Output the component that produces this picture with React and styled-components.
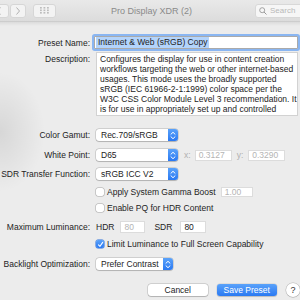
import React from 'react'
import styled, { createGlobalStyle } from 'styled-components'

const Global = createGlobalStyle`
  html, body {
    margin: 0;
    padding: 0;
    width: 300px;
    height: 300px;
    overflow: hidden;
    background: #ececec;
  }
  * { box-sizing: border-box; }
`

const Window = styled.div`
  width: 300px;
  height: 300px;
  overflow: hidden;
  font-family: "Liberation Sans", Arial, sans-serif;
  font-size: 8.5px;
  color: #232323;
  background: #ececec;
  display: flex;
  flex-direction: column;
`

const TitleBar = styled.div`
  height: 22px;
  flex: none;
  display: flex;
  align-items: center;
  padding: 0 0 0 0;
  background: linear-gradient(#e9e9e9, #dcdcdc);
  border-bottom: 1px solid #cdcdcd;
`

const NavGroup = styled.div`
  display: flex;
  margin-left: -11px;
  gap: 1px;
`

const ToolButton = styled.div`
  width: ${p => p.$w || 20}px;
  height: 14px;
  background: #f3f3f3;
  border: 1px solid #d6d6d6;
  border-radius: 3px;
  display: flex;
  align-items: center;
  justify-content: center;
  color: #b5b5b5;
  margin-left: ${p => p.$ml || 0}px;
`

const Title = styled.div`
  flex: 1;
  text-align: center;
  color: #8a8a8a;
  font-size: 9px;
  padding-right: 8px;
`

const Search = styled.div`
  width: 50px;
  height: 14px;
  margin-right: -5px;
  background: #f6f6f6;
  border: 1px solid #d8d8d8;
  border-radius: 3px;
  display: flex;
  align-items: center;
  gap: 3px;
  padding-left: 3px;
  color: #b8b8b8;
  font-size: 8px;
`

const Sheet = styled.div`
  flex: 1;
  position: relative;
  padding-top: 14px;
  background:
    radial-gradient(ellipse 45px 60px at 0 110px, rgba(0,0,0,0.09), transparent),
    linear-gradient(rgba(0,0,0,0.07), transparent 4px),
    #ececec;
`

const Row = styled.div`
  display: grid;
  grid-template-columns: 90px 1fr;
  column-gap: 6px;
  align-items: ${p => p.$top ? 'start' : 'center'};
  margin-top: ${p => p.$mt || 0}px;
`

const Label = styled.div`
  text-align: right;
  white-space: nowrap;
  padding-top: ${p => p.$pt || 0}px;
`

const Controls = styled.div`
  display: flex;
  align-items: center;
  white-space: nowrap;
`

const NameField = styled.div`
  height: 13px;
  margin-right: 2px;
  margin-left: -2px;
  background: #fff;
  border: 1px solid #aaa;
  box-shadow: 0 0 0 2px #8ab6f2;
  border-radius: 1px;
  display: flex;
  align-items: center;
  padding-left: 1px;
`

const Selected = styled.span`
  background: #b3d4fc;
  padding: 1px 2px;
  line-height: 9px;
`

const TextArea = styled.div`
  margin-right: 2px;
  height: 64px;
  background: #fff;
  border: 1px solid #d2d2d2;
  padding: 1px 3px;
  line-height: 10px;
  white-space: nowrap;
  overflow: hidden;
`

const Popup = styled.div`
  width: ${p => p.$w || 82}px;
  height: 12px;
  background: #fff;
  border-radius: 3px;
  box-shadow: 0 0 0 0.5px rgba(0,0,0,0.22), 0 0.5px 1px rgba(0,0,0,0.15);
  display: flex;
  align-items: center;
  justify-content: space-between;
  padding-left: 5px;
  overflow: hidden;
`

const Stepper = styled.div`
  width: 10px;
  height: 12px;
  background: linear-gradient(#5aa2fa, #2a79f2);
  display: flex;
  align-items: center;
  justify-content: center;
`

const Small = styled.span`
  color: ${p => p.$dim ? '#b0b0b0' : '#232323'};
  margin: 0 ${p => p.$mr || 4}px 0 ${p => p.$ml || 0}px;
`

const NumField = styled.div`
  width: ${p => p.$w || 37}px;
  height: ${p => p.$h || 11}px;
  background: #fff;
  border: 1px solid #dcdcdc;
  color: ${p => p.$dim ? '#b4b4b4' : '#232323'};
  display: flex;
  align-items: center;
  padding-left: 3px;
`

const Check = styled.div`
  width: 8px;
  height: 8px;
  border-radius: 2px;
  background: ${p => p.$on ? 'linear-gradient(#5aa2fa, #2a79f2)' : '#fff'};
  box-shadow: 0 0 0 0.5px ${p => p.$on ? '#2a6fd8' : 'rgba(0,0,0,0.3)'};
  margin-right: 3px;
  display: flex;
  align-items: center;
  justify-content: center;
  flex: none;
`

const Buttons = styled.div`
  display: flex;
  align-items: center;
  margin-top: 13px;
  padding-left: 148px;
`

const Button = styled.div`
  width: ${p => p.$w}px;
  height: 12px;
  border-radius: 3px;
  display: flex;
  align-items: center;
  justify-content: center;
  margin-right: ${p => p.$mr || 0}px;
  background: ${p => p.$primary ? 'linear-gradient(#5aa2fa, #2a79f2)' : '#fff'};
  color: ${p => p.$primary ? '#fff' : '#232323'};
  box-shadow: 0 0 0 0.5px rgba(0,0,0,${p => p.$primary ? 0.1 : 0.22}), 0 0.5px 1px rgba(0,0,0,0.15);
`

const Help = styled.div`
  width: 14px;
  height: 14px;
  flex: none;
  border-radius: 50%;
  background: #fff;
  box-shadow: 0 0 0 0.5px rgba(0,0,0,0.22), 0 0.5px 1px rgba(0,0,0,0.15);
  display: flex;
  align-items: center;
  justify-content: center;
  font-size: 9px;
  color: #333;
`

const Chevrons = () => (
  <svg width="6" height="9" viewBox="0 0 6 9">
    <path d="M1 3.2 L3 1.3 L5 3.2 M1 5.8 L3 7.7 L5 5.8" fill="none" stroke="#fff" strokeWidth="1" strokeLinecap="round" strokeLinejoin="round" />
  </svg>
)

const PopupButton = ({ value, w }) => (
  <Popup $w={w}>
    <span>{value}</span>
    <Stepper><Chevrons /></Stepper>
  </Popup>
)

const CheckMark = () => (
  <svg width="7" height="7" viewBox="0 0 7 7">
    <path d="M1.5 3.8 L3 5.3 L5.7 1.4" fill="none" stroke="#fff" strokeWidth="1.1" strokeLinecap="round" strokeLinejoin="round" />
  </svg>
)

const description = [
  'Configures the display for use in content creation',
  'workflows targeting the web or other internet-based',
  'usages. This mode uses the broadly supported',
  'sRGB (IEC 61966-2-1:1999) color space per the',
  'W3C CSS Color Module Level 3 recommendation. It',
  'is for use in appropriately set up and controlled',
]

export default function App() {
  return (
    <Window>
      <Global />
      <TitleBar>
        <NavGroup>
          <ToolButton $w={20}>
            <svg width="6" height="8" viewBox="0 0 6 8"><path d="M4.5 0.5 L1.5 4 L4.5 7.5" fill="none" stroke="#b0b0b0" strokeWidth="1" /></svg>
          </ToolButton>
          <ToolButton $w={16}>
            <svg width="6" height="8" viewBox="0 0 6 8"><path d="M1.5 0.5 L4.5 4 L1.5 7.5" fill="none" stroke="#b0b0b0" strokeWidth="1" /></svg>
          </ToolButton>
        </NavGroup>
        <ToolButton $w={23} $ml={7}>
          <svg width="9" height="7" viewBox="0 0 9 7">
            {[0, 3.5, 7].map(x => [0, 2.5, 5].map(y => (
              <rect key={x + '-' + y} x={x} y={y} width="1.8" height="1.6" fill="#bdbdbd" />
            )))}
          </svg>
        </ToolButton>
        <Title>Pro Display XDR (2)</Title>
        <Search>
          <svg width="8" height="8" viewBox="0 0 8 8">
            <circle cx="3.2" cy="3.2" r="2.5" fill="none" stroke="#9a9a9a" strokeWidth="0.9" />
            <path d="M5 5 L7.5 7.5" stroke="#9a9a9a" strokeWidth="1" />
          </svg>
          <span>Search</span>
        </Search>
      </TitleBar>

      <Sheet>
        <Row>
          <Label>Preset Name:</Label>
          <NameField><Selected>Internet &amp; Web (sRGB) Copy</Selected></NameField>
        </Row>
        <Row $top $mt={3}>
          <Label $pt={2}>Description:</Label>
          <TextArea>
            {description.map(line => <div key={line}>{line}</div>)}
          </TextArea>
        </Row>
        <Row $mt={13}>
          <Label>Color Gamut:</Label>
          <Controls><PopupButton value="Rec.709/sRGB" /></Controls>
        </Row>
        <Row $mt={8}>
          <Label>White Point:</Label>
          <Controls>
            <PopupButton value="D65" />
            <Small $dim $ml={6} $mr={4}>x:</Small>
            <NumField $dim>0.3127</NumField>
            <Small $dim $ml={5} $mr={5}>y:</Small>
            <NumField $dim>0.3290</NumField>
          </Controls>
        </Row>
        <Row $mt={7}>
          <Label>SDR Transfer Function:</Label>
          <Controls><PopupButton value="sRGB ICC V2" /></Controls>
        </Row>
        <Row $mt={7}>
          <div />
          <Controls>
            <Check />
            <span>Apply System Gamma Boost</span>
            <NumField $dim $w={32} $h={10} style={{ marginLeft: 5 }}>1.00</NumField>
          </Controls>
        </Row>
        <Row $mt={6}>
          <div />
          <Controls>
            <Check />
            <span>Enable PQ for HDR Content</span>
          </Controls>
        </Row>
        <Row $mt={8}>
          <Label>Maximum Luminance:</Label>
          <Controls>
            <Small $mr={6}>HDR</Small>
            <NumField $dim $w={25} $h={12}>80</NumField>
            <Small $ml={9} $mr={8}>SDR</Small>
            <NumField $w={26} $h={12}>80</NumField>
          </Controls>
        </Row>
        <Row $mt={6}>
          <div />
          <Controls>
            <Check $on><CheckMark /></Check>
            <span>Limit Luminance to Full Screen Capability</span>
          </Controls>
        </Row>
        <Row $mt={9}>
          <Label>Backlight Optimization:</Label>
          <Controls><PopupButton value="Prefer Contrast" w={77} /></Controls>
        </Row>
        <Buttons>
          <Button $w={60} $mr={9}>Cancel</Button>
          <Button $w={61} $mr={9} $primary>Save Preset</Button>
          <Help>?</Help>
        </Buttons>
      </Sheet>
    </Window>
  )
}
